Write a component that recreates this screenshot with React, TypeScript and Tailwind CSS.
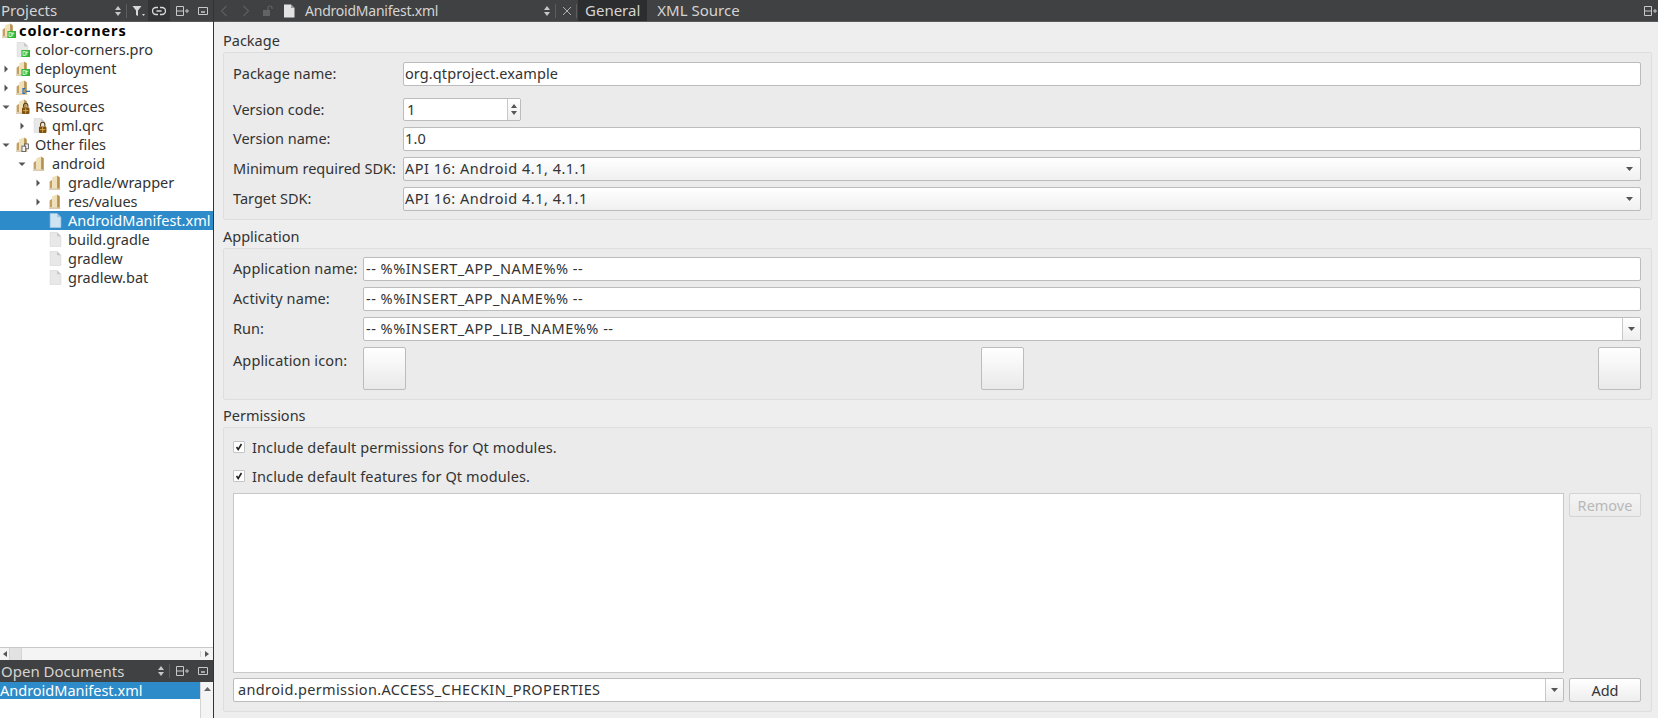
import React from 'react';

type Badge = 'qt' | 'cpp' | 'lock' | 'other' | 'none';

const BadgeMark = ({ badge }: { badge: Badge }) => {
  if (badge === 'qt') {
    return (
      <g>
        <rect x="6" y="7.5" width="8" height="6.5" fill="#2fb52f" />
        <rect x="7.5" y="9" width="2" height="3.5" fill="none" stroke="#e8ffe8" strokeWidth="0.8" />
        <path d="M11 9 V12.5 M10 9.5 H12.5" stroke="#e8ffe8" strokeWidth="0.8" />
      </g>
    );
  }
  if (badge === 'cpp') {
    return (
      <g>
        <path d="M9.5 8 H7.5 V12.5 H9.5" fill="none" stroke="#2a6fb5" strokeWidth="1.2" />
        <rect x="10" y="10" width="4" height="1.2" fill="#2a6fb5" />
      </g>
    );
  }
  if (badge === 'lock') {
    return (
      <g>
        <path d="M8 8 V6 A2 2 0 0 1 12 6 V8" fill="none" stroke="#5b4016" strokeWidth="1" />
        <rect x="6.5" y="8" width="7" height="6" rx="1" fill="#7d500e" />
        <rect x="7.5" y="10.5" width="5" height="0.8" fill="#e2b45a" />
        <rect x="9.6" y="8.5" width="0.8" height="5" fill="#e2b45a" />
      </g>
    );
  }
  if (badge === 'other') {
    return (
      <g fill="#f4f4f4" stroke="#555" strokeWidth="0.8">
        <rect x="9" y="6.5" width="3.5" height="4.5" />
        <rect x="6.5" y="8.5" width="3.5" height="5" />
      </g>
    );
  }
  return null;
};

const FolderIcon = ({ badge = 'none' }: { badge?: Badge }) => (
  <svg width="15" height="15" viewBox="0 0 14 14" className="shrink-0">
    <path d="M1.5 12.5 L1.5 6 L4 4.5 L4 12.5 Z" fill="#c4a062" />
    <path d="M4 2 L8.5 0.5 L8.5 13 L4 13 Z" fill="#efe0b8" />
    <path d="M8.5 0.5 L11 2 L11 13 L8.5 13 Z" fill="#b5904e" />
    <path d="M1 12.5 L11.5 12.5 L11.5 14 L1 14 Z" fill="#d9ccb0" />
    <BadgeMark badge={badge} />
  </svg>
);

const FileIcon = ({ badge = 'none', selected = false }: { badge?: Badge; selected?: boolean }) => (
  <svg width="15" height="15" viewBox="0 0 14 14" className="shrink-0">
    <path d="M2 0.5 H8.5 L12 4 V13.5 H2 Z" fill={selected ? '#cfe3f3' : '#e8e8e8'} stroke={selected ? '#a9cbe6' : '#d6d6d6'} strokeWidth="0.6" />
    <path d="M8.5 0.5 V4 H12 Z" fill={selected ? '#9cc3e2' : '#c4c4c4'} />
    <BadgeMark badge={badge} />
  </svg>
);

const Arrow = ({ open }: { open?: boolean }) => (
  <svg width="8" height="8" viewBox="0 0 8 8" className="shrink-0">
    {open ? <path d="M0.5 2.5 H7.5 L4 6 Z" fill="#555" /> : <path d="M2.5 0.5 L6 4 L2.5 7.5 Z" fill="#555" />}
  </svg>
);

const SortArrows = () => (
  <svg width="8" height="12" viewBox="0 0 8 12" className="shrink-0">
    <path d="M4 1 L7 5 H1 Z M4 11 L1 7 H7 Z" fill="#c8c8c8" />
  </svg>
);

const SplitIcon = () => (
  <svg width="14" height="12" viewBox="0 0 14 12" className="shrink-0">
    <path d="M1.5 1.5 H8.5 V10.5 H1.5 Z M1.5 6 H8.5" fill="none" stroke="#c8c8c8" strokeWidth="1" />
    <path d="M10 6 H14 M12 4 V8" stroke="#c8c8c8" strokeWidth="1" />
  </svg>
);

const CloseDockIcon = () => (
  <svg width="12" height="10" viewBox="0 0 12 10" className="shrink-0">
    <path d="M1.5 1.5 H10.5 V8.5 H1.5 Z" fill="none" stroke="#c8c8c8" strokeWidth="1" />
    <path d="M4 6 H8" stroke="#c8c8c8" strokeWidth="1.5" />
  </svg>
);

const FilterIcon = () => (
  <svg width="14" height="12" viewBox="0 0 14 12" className="shrink-0">
    <path d="M0.5 1 H9.5 L6 5.5 V11 L4 10 V5.5 Z" fill="#d8d8d8" />
    <path d="M10 9 H13 L11.5 11 Z" fill="#d8d8d8" />
  </svg>
);

const LinkIcon = () => (
  <svg width="14" height="10" viewBox="0 0 14 10" className="shrink-0">
    <path d="M6 1.5 H4 A3.5 3.5 0 0 0 4 8.5 H6 M8 1.5 H10 A3.5 3.5 0 0 1 10 8.5 H8 M4.5 5 H9.5" fill="none" stroke="#d8d8d8" strokeWidth="1.4" />
  </svg>
);

const DropArrow = () => (
  <svg width="7" height="4" viewBox="0 0 7 4" className="shrink-0">
    <path d="M0 0 H7 L3.5 4 Z" fill="#555" />
  </svg>
);

type TreeRow = { label: string; level: number; open?: boolean; arrow?: boolean; kind: 'folder' | 'file'; badge?: Badge; bold?: boolean; selected?: boolean };

const rows: TreeRow[] = [
  { label: 'color-corners', level: -1, kind: 'folder', badge: 'qt', bold: true },
  { label: 'color-corners.pro', level: 0, kind: 'file', badge: 'qt' },
  { label: 'deployment', level: 0, arrow: true, kind: 'folder', badge: 'qt' },
  { label: 'Sources', level: 0, arrow: true, kind: 'folder', badge: 'cpp' },
  { label: 'Resources', level: 0, arrow: true, open: true, kind: 'folder', badge: 'lock' },
  { label: 'qml.qrc', level: 1, arrow: true, kind: 'file', badge: 'lock' },
  { label: 'Other files', level: 0, arrow: true, open: true, kind: 'folder', badge: 'other' },
  { label: 'android', level: 1, arrow: true, open: true, kind: 'folder' },
  { label: 'gradle/wrapper', level: 2, arrow: true, kind: 'folder' },
  { label: 'res/values', level: 2, arrow: true, kind: 'folder' },
  { label: 'AndroidManifest.xml', level: 2, kind: 'file', selected: true },
  { label: 'build.gradle', level: 2, kind: 'file' },
  { label: 'gradlew', level: 2, kind: 'file' },
  { label: 'gradlew.bat', level: 2, kind: 'file' },
];

const indentClass: Record<number, string> = {
  [-1]: 'pl-[1px]',
  0: 'pl-[1px]',
  1: 'pl-[17px]',
  2: 'pl-[33px]',
};

const Tree = () => (
  <div className="flex-1 bg-white -mt-px">
    {rows.map((r) => (
      <div
        key={r.label}
        className={`flex items-center h-[19px] whitespace-nowrap ${indentClass[r.level]} ${r.selected ? 'bg-[#2e8bc9] text-white' : 'text-[#333]'}`}
      >
        {r.level >= 0 && (
          <span className={`flex justify-start pl-[1px] ${r.level === 0 ? 'w-[14px]' : 'w-[15px]'}`}>{r.arrow && <Arrow open={r.open} />}</span>
        )}
        {r.kind === 'folder' ? <FolderIcon badge={r.badge} /> : <FileIcon badge={r.badge} selected={r.selected} />}
        <span className={r.bold ? 'ml-[3px] font-bold text-black tracking-[0.9px]' : 'ml-[5px]'}>{r.label}</span>
      </div>
    ))}
  </div>
);

const Label = ({ className, children }: { className: string; children: React.ReactNode }) => (
  <span className={`pb-px text-[#333] whitespace-nowrap ${className}`}>{children}</span>
);

const TextField = ({ value, wide = false }: { value: string; wide?: boolean }) => (
  <div className={`flex items-center flex-1 h-[24px] pb-px bg-white border border-[#bcbcbc] rounded-[2px] text-[#333] ${wide ? 'px-[2px] tracking-[0.5px]' : 'px-[1px] tracking-[0.1px]'}`}>{value}</div>
);

const ComboField = ({ value }: { value: string }) => (
  <div className="flex items-center justify-between flex-1 h-[24px] pb-px border border-[#bcbcbc] rounded-[2px] bg-linear-to-b from-white to-[#f0f0f0] pl-[1px] pr-[7px] text-[#333] tracking-[0.5px]">
    <span>{value}</span>
    <DropArrow />
  </div>
);

const EditCombo = ({ value, spacing }: { value: string; spacing: string }) => (
  <div className="flex flex-1 h-[24px] border border-[#bcbcbc] rounded-[2px] bg-white text-[#333]">
    <span className={`flex-1 flex items-center pb-px ${spacing}`}>{value}</span>
    <span className="w-[18px] flex items-center justify-center border-l border-[#c8c8c8] bg-linear-to-b from-white to-[#eeeeee]">
      <DropArrow />
    </span>
  </div>
);

const Spin = ({ value }: { value: string }) => (
  <div className="flex w-[118px] h-[23px] border border-[#bcbcbc] rounded-[2px] bg-white text-[#333]">
    <span className="flex-1 flex items-center px-[3px]">{value}</span>
    <span className="w-[13px] flex flex-col items-center justify-center gap-[3px] border-l border-[#c8c8c8] bg-linear-to-b from-white to-[#eeeeee]">
      <svg width="6" height="4" viewBox="0 0 6 4"><path d="M3 0 L6 4 H0 Z" fill="#555" /></svg>
      <svg width="6" height="4" viewBox="0 0 6 4"><path d="M0 0 H6 L3 4 Z" fill="#555" /></svg>
    </span>
  </div>
);

const IconButton = () => (
  <div className="w-[43px] h-[43px] border border-[#bcbcbc] rounded-[2px] bg-linear-to-b from-white to-[#e9e9e9]" />
);

const Check = ({ label }: { label: string }) => (
  <div className="flex items-center h-[20px] text-[#333]">
    <span className="w-[12px] h-[12px] border border-[#c4c4c4] rounded-[1px] bg-white flex items-center justify-center">
      <svg width="8" height="8" viewBox="0 0 8 8"><path d="M1.5 4 L3.2 6.5 L6.5 1" fill="none" stroke="#222" strokeWidth="1.6" /></svg>
    </span>
    <span className="ml-[7px] tracking-[0.12px]">{label}</span>
  </div>
);

const Group = ({ title, titleClass, boxClass, children }: { title: string; titleClass: string; boxClass: string; children: React.ReactNode }) => (
  <div className="flex flex-col">
    <div className={`flex items-end pb-[5px] text-[#333] ${titleClass}`}>{title}</div>
    <div className={`border border-[#dedede] rounded-[2px] bg-[#ebebeb] pl-[9px] pr-[10px] ${boxClass}`}>{children}</div>
  </div>
);

export default function App() {
  return (
    <div className="flex w-[1658px] h-[718px] overflow-hidden bg-[#eeeeee] text-[14.5px] leading-none font-['Noto_Sans',sans-serif]">
      {/* left dock */}
      <div className="flex flex-col w-[213px] shrink-0">
        <div className="relative flex items-center h-[22px] bg-[#404142] text-[#d4d4d4] border-b border-[#5a5a5a] pl-[1px]">
          <span className="flex-1 text-[15px]">Projects</span>
          <SortArrows />
          <span className="w-px h-[14px] bg-[#5c5c5c] ml-[4px] mr-[5px]" />
          <FilterIcon />
          <span className="flex items-center justify-center w-[22px] h-[21px] bg-[#333435] ml-[2px]">
            <LinkIcon />
          </span>
          <span className="ml-[5px]"><SplitIcon /></span>
          <span className="ml-[8px] mr-[4px]"><CloseDockIcon /></span>
        </div>
        <Tree />
        <div className="flex items-center h-[13px] bg-[#f4f4f4] border-t border-[#c8c8c8]">
          <span className="w-[9px] flex justify-center">
            <svg width="4" height="6" viewBox="0 0 4 6"><path d="M4 0 V6 L0 3 Z" fill="#555" /></svg>
          </span>
          <span className="w-[13px] h-full bg-[#e2e2e2] border-x border-[#d4d4d4]" />
          <span className="flex-1" />
          <span className="w-[13px] flex justify-center border-l border-[#d4d4d4]">
            <svg width="4" height="6" viewBox="0 0 4 6"><path d="M0 0 V6 L4 3 Z" fill="#555" /></svg>
          </span>
        </div>
        <div className="flex items-center h-[22px] bg-[#404142] text-[#d4d4d4] pl-[1px]">
          <span className="flex-1 text-[15px]">Open Documents</span>
          <SortArrows />
          <span className="w-px h-[14px] bg-[#5c5c5c] ml-[4px] mr-[5px]" />
          <SplitIcon />
          <span className="ml-[8px] mr-[4px]"><CloseDockIcon /></span>
        </div>
        <div className="flex h-[36px] bg-white">
          <div className="flex-1">
            <div className="flex items-center h-[17px] bg-[#2e8bc9] text-white">AndroidManifest.xml</div>
          </div>
          <div className="w-[13px] bg-[#f4f4f4] border-l border-[#d4d4d4] flex justify-center pt-[5px]">
            <svg width="7" height="4" viewBox="0 0 7 4"><path d="M3.5 0 L7 4 H0 Z" fill="#666" /></svg>
          </div>
        </div>
      </div>

      <div className="w-px bg-[#333] shrink-0" />

      {/* editor */}
      <div className="flex flex-col flex-1 min-w-0">
        <div className="flex items-center h-[22px] bg-[#404142] border-b border-[#5a5a5a] text-[#d4d4d4] shrink-0">
          <svg width="8" height="12" viewBox="0 0 8 12" className="ml-[6px]"><path d="M6.5 1 L1.5 6 L6.5 11" fill="none" stroke="#5e5e5e" strokeWidth="1.2" /></svg>
          <svg width="8" height="12" viewBox="0 0 8 12" className="ml-[14px]"><path d="M1.5 1 L6.5 6 L1.5 11" fill="none" stroke="#5e5e5e" strokeWidth="1.2" /></svg>
          <svg width="11" height="11" viewBox="0 0 11 11" className="ml-[13px]"><path d="M0 5 H7 V11 H0 Z" fill="#636363" /><path d="M5 5 V3 A2 2 0 0 1 9 3 V4" fill="none" stroke="#636363" strokeWidth="1.2" /></svg>
          <svg width="12" height="14" viewBox="0 0 12 14" className="ml-[9px]"><path d="M1 0.5 H8 L11.5 4 V13.5 H1 Z" fill="#e2e2e2" /><path d="M8 0.5 V4 H11.5 Z" fill="#9a9a9a" /></svg>
          <span className="ml-[10px] w-[238px] text-[14px] tracking-[-0.23px]">AndroidManifest.xml</span>
          <SortArrows />
          <span className="w-px h-[14px] bg-[#5c5c5c] ml-[4px] mr-[6px]" />
          <svg width="10" height="10" viewBox="0 0 10 10"><path d="M1 1 L9 9 M9 1 L1 9" stroke="#b0b0b0" strokeWidth="1" /></svg>
          <span className="w-px h-[14px] bg-[#5c5c5c] ml-[4px]" />
          <span className="flex items-center h-full px-[7px] bg-[#2c2d2e] ml-[1px] text-[15px]">General</span>
          <span className="ml-[10px] text-[15px]">XML Source</span>
          <span className="flex-1" />
          <span className="mr-[1px]"><SplitIcon /></span>
        </div>

        <div className="flex flex-col pl-[9px] pr-[6px]">
          <Group title="Package" titleClass="h-[30px]" boxClass="h-[168px] pt-[9px]">
            <div className="flex items-center">
              <Label className="w-[170px]">Package name:</Label>
              <TextField value="org.qtproject.example" />
            </div>
            <div className="flex items-center mt-[12px]">
              <Label className="w-[170px]">Version code:</Label>
              <Spin value="1" />
            </div>
            <div className="flex items-center mt-[6px]">
              <Label className="w-[170px]">Version name:</Label>
              <TextField value="1.0" />
            </div>
            <div className="flex items-center mt-[6px]">
              <Label className="w-[170px]">Minimum required SDK:</Label>
              <ComboField value="API 16: Android 4.1, 4.1.1" />
            </div>
            <div className="flex items-center mt-[6px]">
              <Label className="w-[170px]">Target SDK:</Label>
              <ComboField value="API 16: Android 4.1, 4.1.1" />
            </div>
          </Group>

          <Group title="Application" titleClass="h-[28px]" boxClass="h-[152px] pt-[8px]">
            <div className="flex items-center">
              <Label className="w-[130px] tracking-[0.1px]">Application name:</Label>
              <TextField value="-- %%INSERT_APP_NAME%% --" wide />
            </div>
            <div className="flex items-center mt-[6px]">
              <Label className="w-[130px] tracking-[0.1px]">Activity name:</Label>
              <TextField value="-- %%INSERT_APP_NAME%% --" wide />
            </div>
            <div className="flex items-center mt-[6px]">
              <Label className="w-[130px]">Run:</Label>
              <EditCombo value="-- %%INSERT_APP_LIB_NAME%% --" spacing="px-[2px] tracking-[0.5px]" />
            </div>
            <div className="flex mt-[6px]">
              <span className="w-[130px] pt-[6px] text-[#333] tracking-[0.1px]">Application icon:</span>
              <div className="flex flex-1 justify-between">
                <IconButton />
                <IconButton />
                <IconButton />
              </div>
            </div>
          </Group>

          <Group title="Permissions" titleClass="h-[27px]" boxClass="h-[285px] pt-[9px]">
            <Check label="Include default permissions for Qt modules." />
            <div className="mt-[9px]">
              <Check label="Include default features for Qt modules." />
            </div>
            <div className="flex gap-[5px] mt-[7px]">
              <div className="flex-1 h-[180px] bg-white border border-[#c8c8c8]" />
              <div className="flex items-center justify-center w-[72px] h-[24px] border border-[#d4d4d4] rounded-[2px] bg-linear-to-b from-[#f4f4f4] to-[#ebebeb] text-[#b8b8b8]">Remove</div>
            </div>
            <div className="flex gap-[5px] mt-[5px]">
              <EditCombo value="android.permission.ACCESS_CHECKIN_PROPERTIES" spacing="px-[4px] tracking-[0.36px]" />
              <div className="flex items-center justify-center w-[72px] h-[24px] border border-[#bcbcbc] rounded-[2px] bg-linear-to-b from-white to-[#eeeeee] text-[#333]">Add</div>
            </div>
          </Group>
        </div>
      </div>
    </div>
  );
}
